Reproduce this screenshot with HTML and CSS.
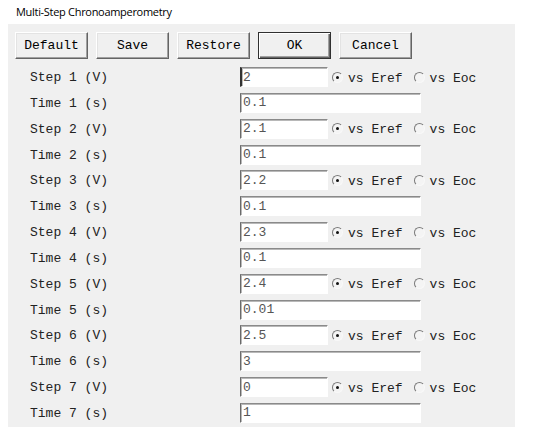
FILE: index.html
```html
<!DOCTYPE html>
<html>
<head>
<meta charset="utf-8">
<link rel="stylesheet" href="styles.css">
</head>
<body>
<div class="title">Multi-Step Chronoamperometry</div>
<div class="panel">
  <div class="buttons">
    <button class="btn">Default</button>
    <button class="btn">Save</button>
    <button class="btn">Restore</button>
    <button class="btn btn-default">OK</button>
    <button class="btn">Cancel</button>
  </div>
  <div class="form">
    <div class="label">Step 1 (V)</div>
    <div class="field"><input class="inp short caret" value="2"><span class="radio on"></span><span class="rtext">vs Eref</span><span class="radio"></span><span class="rtext">vs Eoc</span></div>
    <div class="label">Time 1 (s)</div>
    <div class="field"><input class="inp long" value="0.1"></div>

    <div class="label">Step 2 (V)</div>
    <div class="field"><input class="inp short" value="2.1"><span class="radio on"></span><span class="rtext">vs Eref</span><span class="radio"></span><span class="rtext">vs Eoc</span></div>
    <div class="label">Time 2 (s)</div>
    <div class="field"><input class="inp long" value="0.1"></div>

    <div class="label">Step 3 (V)</div>
    <div class="field"><input class="inp short" value="2.2"><span class="radio on"></span><span class="rtext">vs Eref</span><span class="radio"></span><span class="rtext">vs Eoc</span></div>
    <div class="label">Time 3 (s)</div>
    <div class="field"><input class="inp long" value="0.1"></div>

    <div class="label">Step 4 (V)</div>
    <div class="field"><input class="inp short" value="2.3"><span class="radio on"></span><span class="rtext">vs Eref</span><span class="radio"></span><span class="rtext">vs Eoc</span></div>
    <div class="label">Time 4 (s)</div>
    <div class="field"><input class="inp long" value="0.1"></div>

    <div class="label">Step 5 (V)</div>
    <div class="field"><input class="inp short" value="2.4"><span class="radio on"></span><span class="rtext">vs Eref</span><span class="radio"></span><span class="rtext">vs Eoc</span></div>
    <div class="label">Time 5 (s)</div>
    <div class="field"><input class="inp long" value="0.01"></div>

    <div class="label">Step 6 (V)</div>
    <div class="field"><input class="inp short" value="2.5"><span class="radio on"></span><span class="rtext">vs Eref</span><span class="radio"></span><span class="rtext">vs Eoc</span></div>
    <div class="label">Time 6 (s)</div>
    <div class="field"><input class="inp long" value="3"></div>

    <div class="label">Step 7 (V)</div>
    <div class="field"><input class="inp short" value="0"><span class="radio on"></span><span class="rtext">vs Eref</span><span class="radio"></span><span class="rtext">vs Eoc</span></div>
    <div class="label">Time 7 (s)</div>
    <div class="field"><input class="inp long" value="1"></div>
  </div>
</div>
</body>
</html>
```
FILE: styles.css
```css
html, body {
  margin: 0;
  padding: 0;
  background: #ffffff;
}
body {
  width: 533px;
  height: 434px;
  overflow: hidden;
  font-family: "Courier New", "FreeMono", "Nimbus Mono PS", "Nimbus Mono L", "Liberation Mono", monospace;
}
.title {
  height: 24px;
  padding-left: 16px;
  box-sizing: border-box;
  padding-top: 4px;
  font-family: "Open Sans", "Noto Sans", sans-serif;
  font-size: 11px;
  line-height: 16px;
  color: #000;
  letter-spacing: -0.3px;
}
.panel {
  margin-left: 8px;
  width: 507px;
  height: 403px;
  background: #f0f0f0;
  box-sizing: border-box;
  padding: 8px 0 0 7px;
}
.buttons {
  display: flex;
  gap: 8px;
  height: 27px;
}
.btn {
  width: 73px;
  height: 27px;
  margin: 0;
  padding: 0;
  background: #f0f0f0;
  font-family: inherit;
  font-size: 13px;
  color: #000;
  border: 1px solid;
  border-color: #ffffff #646464 #646464 #ffffff;
  box-shadow: inset -1px -1px 0 #a0a0a0, inset 1px 1px 0 #e3e3e3;
}
.btn-default {
  border-color: #303030;
  box-shadow: inset 1px 1px 0 #ffffff, inset -1px -1px 0 #646464, inset -2px -2px 0 #a0a0a0;
}
.form {
  margin-top: 8px;
  margin-left: 15px;
  display: grid;
  grid-template-columns: 210px auto;
  grid-auto-rows: 25.85px;
}
.label {
  font-size: 13px;
  line-height: 22px;
  height: 20px;
  color: #222;
}
.field {
  display: flex;
  align-items: center;
  height: 20px;
}
.inp {
  box-sizing: border-box;
  height: 20px;
  margin: 0;
  padding: 0 0 0 2px;
  background: #fff;
  border: 1px solid;
  border-color: #8a8a8a #ffffff #ffffff #6a6a6a;
  box-shadow: inset 1px 1px 0 #b8b8b8;
  font-family: inherit;
  font-size: 13px;
  color: #555;
  outline: none;
}
.inp.short { width: 88px; }
.inp.long { width: 181px; }
.caret { border-left: 2px solid #333; padding-left: 1px; }
.radio {
  width: 11px;
  height: 11px;
  box-sizing: border-box;
  border-radius: 50%;
  border: 1px solid;
  border-color: #7a7a7a #f8f8f8 #f8f8f8 #7a7a7a;
  background: #f4f4f4;
  position: relative;
  margin-left: 4px;
  margin-right: 5px;
  flex: none;
}
.radio.on::after {
  content: "";
  position: absolute;
  left: 3px;
  top: 3px;
  width: 3px;
  height: 3px;
  border-radius: 50%;
  background: #111;
}
.rtext + .radio { margin-left: 11px; }
.rtext {
  font-size: 13px;
  color: #222;
  white-space: pre;
  padding-top: 2px;
}
```
